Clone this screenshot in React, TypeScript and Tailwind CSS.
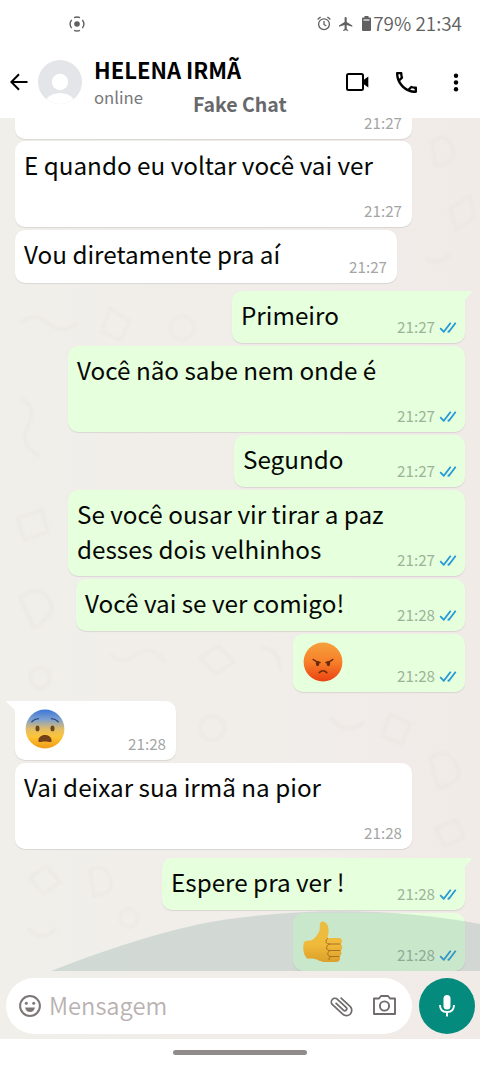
import type { ReactNode } from "react";

const font = "font-['Noto_Sans_CJK_SC','Noto_Sans',sans-serif]";

function Ticks() {
  return (
    <svg className="mt-[2px]" width="18" height="13" viewBox="0 0 18 13" fill="none" stroke="#2499d6" strokeWidth="1.8">
      <path d="M1.200 7.200 4.800 10.800 11.700 1.800M8.600 10.400 9.900 10.800 16.700 1.800" strokeLinejoin="round" />
    </svg>
  );
}

function Angry() {
  return (
    <svg width="40" height="40" viewBox="0 0 40 40">
      <defs>
        <linearGradient id="angry" x1="0" y1="0" x2="0" y2="1">
          <stop offset="0" stopColor="#f5a03c" />
          <stop offset=".5" stopColor="#f7802b" />
          <stop offset="1" stopColor="#ea4210" />
        </linearGradient>
      </defs>
      <circle cx="20" cy="20" r="19.4" fill="url(#angry)" />
      <g fill="#6b2a0c">
        <ellipse cx="14.600" cy="21.600" rx="1.800" ry="2.600" />
        <ellipse cx="25.400" cy="21.600" rx="1.800" ry="2.600" />
      </g>
      <path d="M10.200 17.600Q12.500 20 17 20.600M29.800 17.600Q27.500 20 23 20.600M16.200 30.600Q20 26.800 23.800 30.600" fill="none" stroke="#6b2a0c" strokeWidth="1.500" strokeLinecap="round" />
    </svg>
  );
}

function Anguished() {
  return (
    <svg width="40" height="40" viewBox="0 0 40 40">
      <defs>
        <linearGradient id="fear" x1="0" y1="0" x2="0" y2="1">
          <stop offset="0" stopColor="#3b76d8" />
          <stop offset=".25" stopColor="#7c9fcf" />
          <stop offset=".5" stopColor="#e2bc68" />
          <stop offset=".7" stopColor="#fcc536" />
          <stop offset="1" stopColor="#f19a15" />
        </linearGradient>
      </defs>
      <circle cx="20" cy="20" r="19.4" fill="url(#fear)" />
      <ellipse cx="12.500" cy="19.400" rx="2" ry="2.900" fill="#68461b" />
      <ellipse cx="27.500" cy="19.400" rx="2" ry="2.900" fill="#68461b" />
      <path d="M6.800 12.800Q9.500 9.800 13.500 9.600M33.200 12.800Q30.500 9.800 26.500 9.600" fill="none" stroke="#284a80" strokeWidth="1.400" strokeLinecap="round" />
      <path d="M13.400 32C13.400 28.500 16 26 20 26S26.600 28.500 26.600 32C26.600 34 23.500 32.500 20 32.500S13.400 34 13.400 32Z" fill="#74401a" />
    </svg>
  );
}

function ThumbUp() {
  return (
    <svg width="40" height="42" viewBox="0 0 40 42">
      <defs>
        <linearGradient id="thumb" x1="0" y1="0" x2="0" y2="1">
          <stop offset="0" stopColor="#e8bd45" />
          <stop offset=".55" stopColor="#f0ba3a" />
          <stop offset="1" stopColor="#dca02a" />
        </linearGradient>
      </defs>
      <path d="M1 21Q3 19 8 19.500C12 18 15 13 16.500 9.500L17 2.500Q17.200.600 19.500.600C25 1 26 7 25.500 12L24.500 17H36Q39.500 17.500 39 20.500Q38.800 22 37.500 23Q40 24.500 39 27.500Q38.500 29 37.500 29.500Q39 31.500 38 33.500Q37.500 35 36.500 35.500Q38 38 36 40Q35 41 33 41H24C17 41.500 15 38 9 37.500H4Q-1.500 31 1 21Z" fill="url(#thumb)" />
      <path d="M25 17.200Q22.500 18.500 23 21.500 24 23 27 23H37.500M27 23Q23 24 23.800 28 24.500 29.600 27 29.500H37.500M27 29.500Q24 31 24.800 34 25.500 35.500 28 35.500H36.500M28 35.500Q25.500 36.500 26 39" fill="none" stroke="#ab7022" strokeWidth="1" />
    </svg>
  );
}

type MessageProps = {
  children: ReactNode;
  time: string;
  box: string;
  sent?: boolean;
  tail?: boolean;
  emoji?: boolean;
};

function Message({ children, time, box, sent, tail, emoji }: MessageProps) {
  return (
    <div
      className={`relative flex shrink-0 flex-col items-start rounded-[10px] shadow-[0_1px_1px_rgba(80,70,75,0.14)] ${
        sent ? "self-end bg-[#e6ffdd]" : "self-start bg-white"
      } ${tail ? (sent ? "rounded-tr-none" : "rounded-tl-none") : ""} ${box}`}
    >
      {tail && (
        <svg
          className={sent ? "absolute top-0 -right-[7px]" : "absolute top-0 -left-[9px]"}
          width={sent ? 8 : 10}
          height="11"
          viewBox="0 0 10 11"
          preserveAspectRatio="none"
        >
          {sent ? <path d="M0 0H9Q10 1 9 2L1 9V11H0Z" fill="#e6ffdd" /> : <path d="M10 0H1Q0 .5 1 1.500L8 8 9 11H10Z" fill="#fff" />}
        </svg>
      )}
      <div
        className={
          emoji
            ? "pt-[8px] pl-[10px]"
            : "pt-[6px] pl-[9px] text-[24.250px] leading-[35px] whitespace-pre text-[#050805]"
        }
      >
        {children}
      </div>
      <div className={`absolute bottom-[7px] flex items-center gap-[4px] ${sent ? "right-[8px]" : "right-[10px]"}`}>
        <span className={`text-[15.2px] leading-[20px] ${sent ? "text-[#9db398]" : "text-[#a5a5a5]"}`}>{time}</span>
        {sent && <Ticks />}
      </div>
    </div>
  );
}

function StatusBar() {
  return (
    <div className="flex h-[47px] items-center pr-[18px] pl-[69px] text-[#606060]">
      <svg width="16" height="16" viewBox="0 0 16 16" fill="none" stroke="currentColor" strokeWidth="1.400">
        <circle cx="8" cy="8" r="2.800" fill="currentColor" stroke="none" />
        <path d="M5 1.700Q8 .400 11 1.700M5 14.300Q8 15.600 11 14.300M2.600 3.800Q-.400 8 2.600 12.200M13.400 3.800Q16.400 8 13.400 12.200" />
      </svg>
      <svg className="ml-auto" width="14" height="15" viewBox="0 0 14 15" fill="none" stroke="currentColor" strokeWidth="1.300">
        <circle cx="7" cy="8.200" r="5.400" />
        <path d="M7 5V8.500L9.300 10M.600 3.600 3.600 1M13.400 3.600 10.400 1" />
      </svg>
      <svg className="ml-[8px]" width="14" height="14" viewBox="2 2 20 20" fill="currentColor" preserveAspectRatio="none">
        <path d="M21 16v-2l-8-5V3.500a1.500 1.500 0 0 0-3 0V9l-8 5v2l8-2.500V19l-2 1.500V22l3.500-1 3.500 1v-1.500L13 19v-5.500z" />
      </svg>
      <svg className="ml-[9px]" width="9" height="15" viewBox="0 0 9 15">
        <path d="M2.500 0H6.500V1.500H8Q9 1.500 9 2.500V14Q9 15 8 15H1Q0 15 0 14V2.500Q0 1.500 1 1.500H2.500Z" fill="currentColor" />
        <path d="M1.500 3H7.500V5H1.500Z" fill="#bbb" />
      </svg>
      <span className="mb-[2px] ml-[2px] text-[18.900px] leading-[24px] font-[350] whitespace-pre">79% 21:34</span>
    </div>
  );
}

function Header() {
  return (
    <div className="flex h-[71px] items-start">
      <svg className="mt-[26px] ml-[10px]" width="18" height="18" viewBox="0 0 18 18" fill="none" stroke="#000" strokeWidth="2">
        <path d="M17.500 9H1.500M9 1.300 1.300 9 9 16.700" />
      </svg>
      <svg className="mt-[13px] ml-[10px]" width="44" height="44" viewBox="0 0 44 44">
        <defs>
          <clipPath id="avatar">
            <circle cx="22" cy="22" r="22" />
          </clipPath>
        </defs>
        <g clipPath="url(#avatar)">
          <rect width="44" height="44" fill="#e4e5e9" />
          <circle cx="22" cy="22" r="8.200" fill="#fff" />
          <path d="M7 44Q8 34 22 33Q36 34 37 44Z" fill="#fff" />
        </g>
      </svg>
      <div className="ml-[12px] flex flex-col pt-[7px] whitespace-pre">
        <div className="h-[29px] text-[22px] leading-[30px] font-bold text-black">HELENA IRMÃ</div>
        <div className="flex h-[28px]">
          <span className="w-[99px] text-[16.7px] leading-[28px] text-[#77777b]">online</span>
          <span className="pt-[7px] text-[19.5px] leading-[28px] font-bold text-[#68686b]">Fake Chat</span>
        </div>
      </div>
      <div className="mt-[24px] mr-[21px] ml-auto flex h-[22px] items-center">
        <svg width="23" height="18" viewBox="0 0 23 18">
          <rect x="1" y="1" width="16" height="16" rx="1.500" fill="none" stroke="#000" strokeWidth="2" />
          <path d="M17.500 7 22.300 3.500V14.500L17.500 11Z" />
        </svg>
        <svg className="ml-[27px]" width="21" height="21" viewBox="3 3 18 18">
          <path d="M6.540 5c.060.890.210 1.760.450 2.590l-1.200 1.200c-.410-1.200-.670-2.470-.760-3.790h1.510m9.860 12.020c.850.240 1.720.390 2.600.450v1.490c-1.320-.090-2.590-.350-3.800-.750l1.200-1.190M7.500 3H4c-.550 0-1 .450-1 1 0 9.390 7.610 17 17 17 .550 0 1-.450 1-1v-3.490c0-.550-.450-1-1-1-1.240 0-2.450-.200-3.570-.570-.100-.040-.210-.050-.310-.050-.260 0-.510.100-.710.290l-2.200 2.200c-2.830-1.450-5.150-3.760-6.590-6.590l2.200-2.200c.280-.280.360-.670.250-1.020C8.700 6.450 8.500 5.250 8.500 4c0-.550-.450-1-1-1z" />
        </svg>
        <svg className="ml-[36px]" width="6" height="19" viewBox="0 0 6 19">
          <circle cx="3" cy="2.700" r="2.200" />
          <circle cx="3" cy="9.500" r="2.200" />
          <circle cx="3" cy="16.300" r="2.200" />
        </svg>
      </div>
    </div>
  );
}

function Composer() {
  return (
    <div className="flex h-[68px] shrink-0 items-start gap-[7px] pt-[7px] pr-[5px] pl-[6px]">
      <div className="flex h-[56px] w-[406px] items-center rounded-full bg-white pr-[16px] pl-[13px]">
        <svg width="22" height="22" viewBox="0 0 22 22" fill="none" stroke="#7d7676" strokeWidth="2">
          <circle cx="11" cy="11" r="9.900" />
          <g fill="#7d7676" stroke="none">
            <circle cx="7.300" cy="8.200" r="1.500" />
            <circle cx="14.700" cy="8.200" r="1.500" />
            <path d="M6 12.500H16Q14.800 17 11 17T6 12.500Z" />
          </g>
        </svg>
        <span className="mb-[2px] ml-[8px] text-[23.700px] leading-[36px] font-[350] text-[#b9b1b1]">Mensagem</span>
        <svg className="mr-[-1px] ml-auto" width="27" height="27" viewBox="0 0 24 24" fill="#706b6b">
          <path
            transform="rotate(-47 12 12)"
            d="M16.500 6v11.500c0 2.210-1.790 4-4 4s-4-1.790-4-4V5a2.500 2.500 0 0 1 5 0v10.500c0 .550-.450 1-1 1s-1-.450-1-1V6H10v9.500a2.500 2.500 0 0 0 5 0V5c0-2.210-1.790-4-4-4S7 2.790 7 5v12.500c0 3.040 2.460 5.500 5.500 5.500s5.500-2.460 5.500-5.500V6h-1.500z"
          />
        </svg>
        <svg className="mb-[2px] ml-[19px]" width="23" height="20" viewBox="0 0 23 20" fill="none" stroke="#706b6b" strokeWidth="1.900">
          <path d="M1 3.500H6L8 1H15L17 3.500H22V19H1Z" strokeLinejoin="round" />
          <circle cx="11.500" cy="11" r="4.600" />
        </svg>
      </div>
      <div className="flex h-[56px] w-[56px] items-center justify-center rounded-full bg-[#048b7d]">
        <svg width="16" height="22" viewBox="0 0 16 22" fill="none" stroke="#fff" strokeWidth="1.900">
          <rect x="4.500" y="0" width="7" height="14.500" rx="3.500" fill="#fff" stroke="none" />
          <path d="M1 10Q1 17 8 17T15 10M8 17V21.500" />
        </svg>
      </div>
    </div>
  );
}

function Wallpaper() {
  return (
    <svg className="absolute top-0 left-0 blur-[1px]" width="480" height="853" viewBox="0 0 480 853" fill="none" stroke="#d8cfc9" strokeOpacity=".12" strokeWidth="3">
      <path d="M432 25Q444 12 452 28T436 48ZM450 90 470 78 474 100 456 112ZM426 140q12 10 24-4M20 205q14-12 28 0t30 0M110 190l20 14-10 18-18-8ZM170 210a12 12 0 1 0 24 0a12 12 0 1 0-24 0M20 280q18 8 8 28t12 30M18 400l24-8 6 22-24 8ZM20 480q16-14 28 0t-14 30ZM30 560a10 10 0 1 0 20 0a10 10 0 1 0-20 0M110 535q10 14 26 2t30 8M200 540l18-12 16 16-18 12ZM260 530q20 0 20 22" />
      <path d="M200 610a12 12 0 1 0 24 0a12 12 0 1 0-24 0M330 600q16 18 34 4M390 596l20 10-8 20-20-8ZM430 640q16-12 26 6t-18 24ZM436 710l20-8 8 18-20 8ZM30 760l16-12 14 16-16 12ZM90 752q14-8 20 8t-16 18ZM28 810q14 16 28 0M120 800a9 9 0 1 0 18 0a9 9 0 1 0-18 0" />
    </svg>
  );
}

export default function App() {
  return (
    <div className={`flex h-[1066px] w-[480px] flex-col overflow-hidden bg-white ${font}`}>
      <StatusBar />
      <Header />
      <div className="flex h-[921px] flex-col bg-[linear-gradient(90deg,#f0efea_0%,#f1eeea_35%,#f1ebe8_100%)]">
        <div className="relative flex h-[853px] shrink-0 flex-col gap-[3px] overflow-hidden pr-[15px] pl-[15px]">
          <Wallpaper />
          <Message time="21:27" box="-mt-[31px] h-[52px] w-[397px]">{""}</Message>
          <Message time="21:27" box="h-[86px] w-[397px] -mt-px">E quando eu voltar você vai ver</Message>
          <Message time="21:27" box="h-[53px] w-[382px]">Vou diretamente pra aí</Message>
          <Message time="21:27" sent tail box="mt-[5px] h-[52px] w-[233px]">Primeiro</Message>
          <Message time="21:27" sent box="h-[86px] w-[397px]">Você não sabe nem onde é</Message>
          <Message time="21:27" sent box="h-[52px] w-[231px]">Segundo</Message>
          <Message time="21:27" sent box="h-[86px] w-[397px]">{"Se você ousar vir tirar a paz\ndesses dois velhinhos"}</Message>
          <Message time="21:28" sent box="h-[52px] w-[389px]">Você vai se ver comigo!</Message>
          <Message time="21:28" sent emoji box="h-[58px] w-[172px]"><Angry /></Message>
          <Message time="21:28" tail emoji box="mt-[6px] h-[59px] w-[161px]"><Anguished /></Message>
          <Message time="21:28" box="h-[86px] w-[397px]">Vai deixar sua irmã na pior</Message>
          <Message time="21:28" sent tail box="mt-[6px] h-[52px] w-[303px]">Espere pra ver !</Message>
          <Message time="21:28" sent emoji box="h-[58px] w-[172px]">
            <div className="relative z-10"><ThumbUp /></div>
          </Message>
          <svg className="absolute bottom-0 left-0" width="480" height="64" viewBox="0 0 480 64">
            <path d="M51 64C100 45 145 29 200 17C290 0 390 0 480 17V64Z" fill="#5f8f88" fillOpacity=".21" />
          </svg>
        </div>
        <Composer />
      </div>
      <div className="flex flex-1 justify-center">
        <div className="mt-[11px] h-[5px] w-[134px] rounded-full bg-[#918c8c]" />
      </div>
    </div>
  );
}
